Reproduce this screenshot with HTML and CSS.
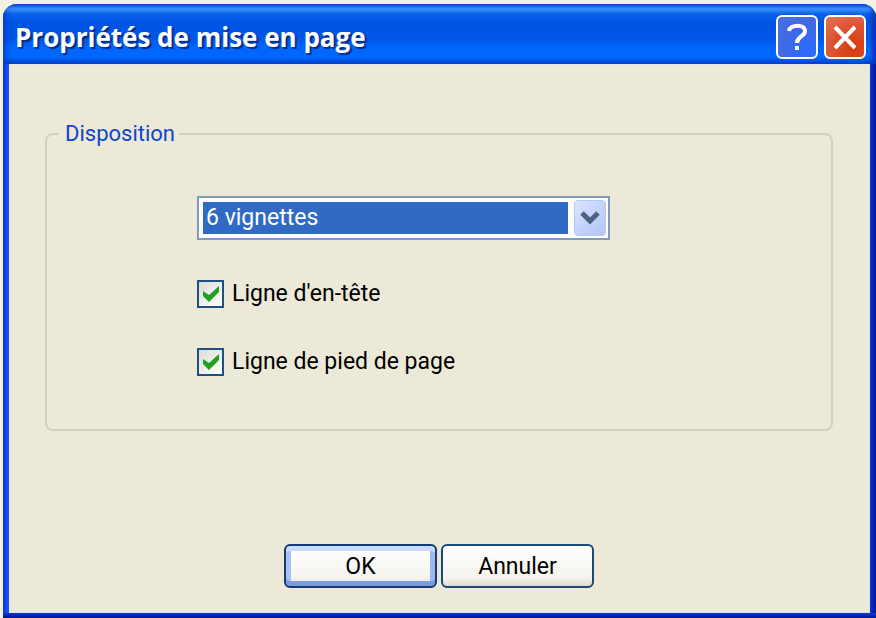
FILE: index.html
```
<!DOCTYPE html>
<html lang="fr">
<head>
    <meta charset="UTF-8">
    <meta name="viewport" content="width=device-width, initial-scale=1.0">
    <title>Propriétés de mise en page</title>
    <link rel="stylesheet" href="styles.css">
</head>
<body>
    <div class="window">
        <header class="titlebar">
            <h1>Propriétés de mise en page</h1>
            <button type="button" class="title-btn help" aria-label="Aide">
                <svg width="36" height="36" viewBox="0 0 36 36" fill="none" stroke="#fff" stroke-width="4">
                    <path d="M10 12 C11 5 26 5 26 12 C26 18 18 17 18 24"/>
                    <path d="M18 27 V31"/>
                </svg>
            </button>
            <button type="button" class="title-btn close" aria-label="Fermer">
                <svg width="36" height="36" viewBox="0 0 36 36" fill="none" stroke="#fff" stroke-width="4">
                    <path d="M8 8 L28 29 M28 8 L8 29"/>
                </svg>
            </button>
        </header>

        <form class="content">
            <fieldset>
                <legend>Disposition</legend>

                <div class="select">
                    <select id="layout" aria-label="Disposition">
                        <option>6 vignettes</option>
                    </select>
                    <span class="arrow">
                        <svg width="20" height="16" viewBox="0 0 20 16" fill="none" stroke="#4d6185" stroke-width="5">
                            <path d="M2 3 L10 11 L18 3"/>
                        </svg>
                    </span>
                </div>

                <label class="check">
                    <input type="checkbox" checked>
                    <svg width="16" height="16" viewBox="0 0 16 16">
                        <path d="M0 5 L6 9 L16 0 V6 L6 16 L0 10 Z" fill="#21a121"/>
                    </svg>
                    <span>Ligne d'en-tête</span>
                </label>

                <label class="check">
                    <input type="checkbox" checked>
                    <svg width="16" height="16" viewBox="0 0 16 16">
                        <path d="M0 5 L6 9 L16 0 V6 L6 16 L0 10 Z" fill="#21a121"/>
                    </svg>
                    <span>Ligne de pied de page</span>
                </label>
            </fieldset>

            <div class="buttons">
                <button type="button" class="btn default">OK</button>
                <button type="button" class="btn">Annuler</button>
            </div>
        </form>
    </div>
</body>
</html>
```
FILE: styles.css
```
* {
    box-sizing: border-box;
}

body {
    margin: 0;
    padding: 4px 0 0 3px;
    background: #f4f2e4;
    font-family: Roboto, Arial, sans-serif;
    font-size: 23px;
    line-height: 28px;
    color: #000;
}

.window {
    display: flex;
    flex-direction: column;
    min-height: calc(100vh - 4px);
    background:
        linear-gradient(#0a3cd8, #00138c) bottom / 100% 5px no-repeat,
        linear-gradient(to right, #0831d9, #1660ee 6px, #0831d9 50%, #0a35d0 calc(100% - 6px), #00138c);
    border-radius: 14px 14px 0 0;
    overflow: hidden;
}

.titlebar {
    display: flex;
    align-items: center;
    gap: 6px;
    height: 60px;
    padding: 6px 10px 0 12px;
    background: linear-gradient(to bottom, #0a50cf, #3a92ff 5px, #0a62ea 10px, #0054e3 18px, #0056e6 34px, #0067fd 44px, #0066ff 53px, #0046d0);
    box-shadow: inset 5px 0 6px -3px #0a36c0, inset -5px 0 5px -1px #0a32b8;
}

.titlebar h1 {
    flex: 1;
    margin: 0;
    font-family: "Open Sans", sans-serif;
    font-size: 26px;
    line-height: 36px;
    font-weight: 700;
    color: #fff;
    text-shadow: 2px 2px 1px #0a2a8c;
}

.title-btn {
    width: 42px;
    height: 44px;
    padding: 0;
    display: flex;
    align-items: center;
    justify-content: center;
    border: 2px solid #fff;
    border-radius: 6px;
}

.help {
    background: radial-gradient(circle at 75% 80%, #2a6cff, #3f68e6 50%, #4a72dc);
}

.close {
    background: radial-gradient(circle at 75% 80%, #d63c0c, #dc5030 50%, #e07858);
}

.content {
    flex: 1;
    display: flex;
    flex-direction: column;
    margin: 0 6px 5px;
    padding: 55px 36px 24px 35px;
    background: #ece9d8;
    border: 1px solid #dfe3ee;
}

fieldset {
    margin: 0;
    padding: 48px 20px 53px 150px;
    border: 2px solid #d0d0bf;
    border-radius: 8px;
}

legend {
    margin-left: -138px;
    padding: 0 4px 0 6px;
    font-size: 22px;
    color: #0f46d0;
}

.select {
    position: relative;
    width: 413px;
    max-width: 100%;
    margin-bottom: 40px;
}

select {
    appearance: none;
    display: block;
    width: 100%;
    height: 44px;
    padding: 4px 40px 4px 4px;
    border: 2px solid #7f9db9;
    border-radius: 0;
    background: linear-gradient(#316ac5, #316ac5) content-box, #fff;
    font: inherit;
    text-indent: 3px;
    color: #fff;
}

.arrow {
    position: absolute;
    top: 4px;
    right: 4px;
    width: 32px;
    height: 36px;
    display: flex;
    align-items: center;
    justify-content: center;
    border: 1px solid #b5c8f4;
    border-radius: 4px;
    background: linear-gradient(135deg, #dce6ff, #c1d0fc 60%, #b4c6f5);
    pointer-events: none;
}

.check {
    display: grid;
    grid-template-columns: 27px auto;
    justify-content: start;
    align-items: center;
    gap: 8px;
    margin-bottom: 40px;
}

.check:last-child {
    margin-bottom: 0;
}

.check input {
    appearance: none;
    grid-area: 1 / 1;
    width: 27px;
    height: 28px;
    margin: 0;
    border: 2px solid #1c5180;
    background: linear-gradient(135deg, #dcdcd7, #fff);
}

.check svg {
    grid-area: 1 / 1;
    justify-self: center;
    visibility: hidden;
    pointer-events: none;
}

.check input:checked + svg {
    visibility: visible;
}

.buttons {
    display: flex;
    justify-content: center;
    gap: 4px;
    margin-top: auto;
}

.btn {
    width: 153px;
    height: 44px;
    padding: 2px 0 0;
    border: 2px solid #1a4a78;
    border-radius: 6px;
    background: linear-gradient(#fff, #f4f3ee 80%, #dfdacb);
    font: inherit;
    color: #000;
}

.btn.default {
    border-color: #143c74;
    box-shadow: inset 0 5px 0 #cbdcf9, inset 0 -5px 0 #7d9be0, inset 5px 0 0 #a9c2f2, inset -5px 0 0 #a0b8ee;
}
```
